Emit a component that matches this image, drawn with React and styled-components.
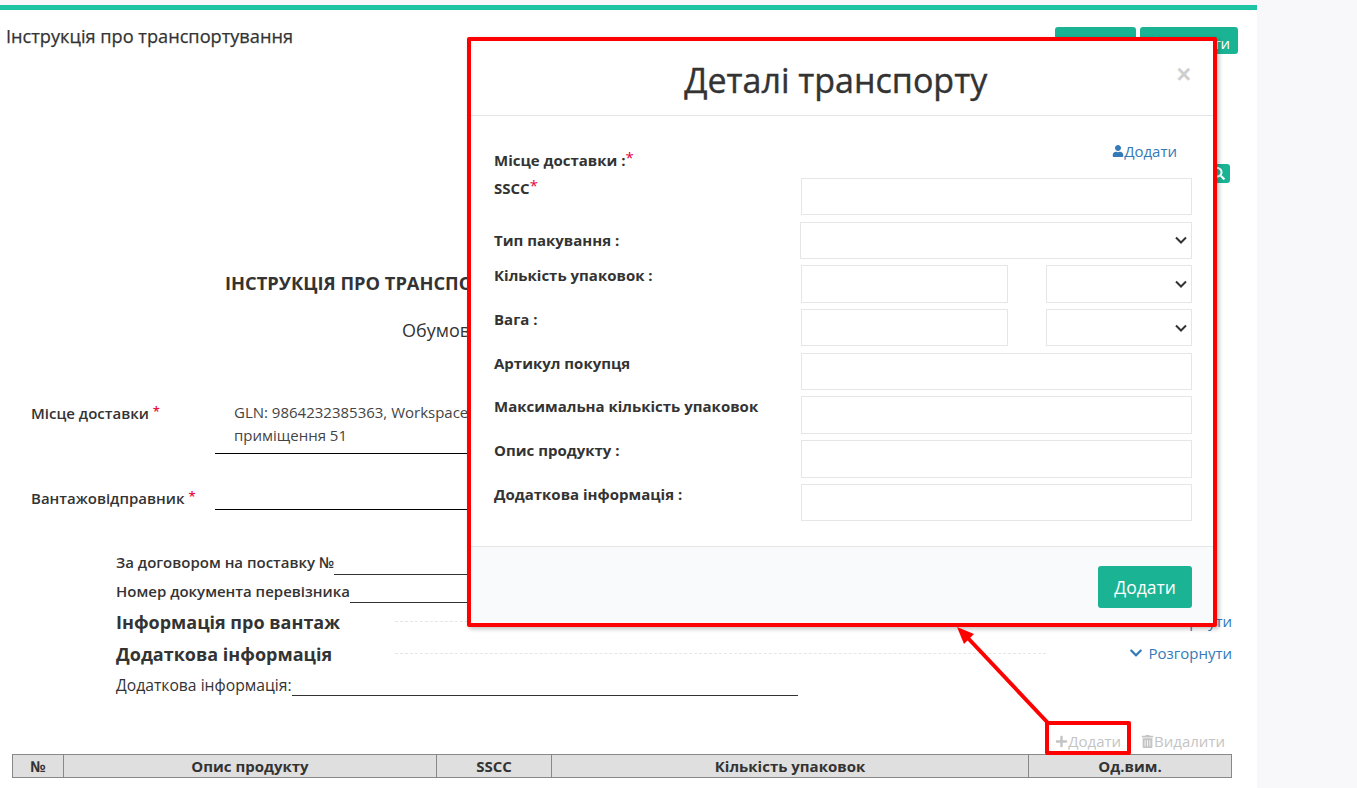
import React from "react"
import styled, { createGlobalStyle } from "styled-components"
import { FaChevronDown, FaPlus, FaSave, FaSearch, FaTrashAlt, FaUser, FaPaperPlane } from "react-icons/fa"

const GlobalStyle = createGlobalStyle`
  html, body {
    margin: 0;
    padding: 0;
    height: 100%;
    overflow: hidden;
    background: #f8f8fb;
  }
  body {
    font-family: "Open Sans", "Noto Sans", sans-serif;
    font-size: 15px;
    color: #333;
  }
  * {
    box-sizing: border-box;
  }
`

const Page = styled.div`
  position: relative;
  width: 1357px;
  height: 788px;
  overflow: hidden;
`

const Main = styled.div`
  width: 1257px;
  height: 788px;
  padding-top: 5px;
  background: linear-gradient(#f8f8fb 5px, #fff 5px);
`

const TopBand = styled.div`
  height: 5px;
  background: #1fc4a4;
`

const Header = styled.div`
  display: flex;
  justify-content: space-between;
  padding: 17px 19px 0 6px;
`

const PageTitle = styled.h2`
  margin: -1px 0 0;
  font-size: 18.2px;
  line-height: 20px;
  font-weight: 500;
  color: #333;
  -webkit-text-stroke: 0.25px #333;
`

const HeaderButtons = styled.div`
  display: flex;
  gap: 4px;
`

const GreenButton = styled.button`
  display: flex;
  align-items: center;
  justify-content: space-between;
  width: ${(p) => p.$width}px;
  height: 27px;
  padding: 5px 8px 0;
  border: 0;
  border-radius: 3px;
  background: #1ab394;
  color: #fff;
  font: 400 15px "Open Sans", sans-serif;
  svg {
    margin-top: -3px;
    font-size: 15px;
  }
`

const SearchRow = styled.div`
  display: flex;
  justify-content: flex-end;
  margin-top: 110px;
  padding-right: 27px;
`

const SearchButton = styled.button`
  display: flex;
  align-items: center;
  justify-content: flex-end;
  width: 40px;
  height: 19px;
  padding: 0 5px 0 0;
  border: 0;
  border-radius: 3px;
  background: #1ab394;
  color: #fff;
  font-size: 13px;
`

const DocHeading = styled.h3`
  margin: 88px 0 0;
  padding-left: 225px;
  font-size: 18.3px;
  line-height: 24px;
  font-weight: 700;
  color: #333;
`

const DocSubtitle = styled.div`
  margin-top: 23px;
  padding-left: 402px;
  font-size: 18px;
  line-height: 24px;
`

const PartyRow = styled.div`
  display: flex;
  margin-top: ${(p) => p.$top}px;
  padding-left: 31px;
`

const PartyLabel = styled.div`
  width: 184px;
  font-weight: 600;
  line-height: 23px;
`

const Star = styled.span`
  position: relative;
  top: -3px;
  margin-left: 4px;
  color: #e8103f;
  font-size: 13px;
`

const PartyValue = styled.div`
  width: 700px;
  height: ${(p) => p.$height}px;
  margin-top: -1px;
  padding-left: 19px;
  border-bottom: 1px solid #000;
  line-height: 23px;
  color: #444;
`

const LineRow = styled.div`
  display: flex;
  height: ${(p) => p.$height}px;
  margin-top: ${(p) => p.$top}px;
  padding-left: 116px;
  line-height: ${(p) => p.$leading || 20}px;
  font-size: ${(p) => p.$size || 15}px;
  font-weight: ${(p) => p.$weight || 600};
`

const LineFill = styled.div`
  width: ${(p) => p.$width}px;
  border-bottom: 1px solid #333;
`

const SectionRow = styled.div`
  display: flex;
  align-items: center;
  height: 24px;
  margin-top: ${(p) => p.$top}px;
  padding: 0 25px 0 116px;
`

const SectionTitle = styled.div`
  width: 279px;
  font-size: 18px;
  font-weight: 700;
  line-height: 24px;
`

const Dashes = styled.div`
  width: 651px;
  margin-top: -2px;
  border-top: 1px dashed #e5e6e7;
`

const Toggle = styled.a`
  display: flex;
  align-items: center;
  gap: 5px;
  margin: -3px 0 0 auto;
  color: #337ab7;
  font-size: 15px;
  line-height: 20px;
  svg {
    font-size: 14px;
  }
`

const Actions = styled.div`
  display: flex;
  justify-content: flex-end;
  gap: 20px;
  height: 20px;
  margin-top: 35px;
  padding-right: 32px;
`

const ActionLink = styled.a`
  display: flex;
  align-items: center;
  color: #c4c4c4;
  line-height: 20px;
  svg {
    font-size: 13px;
  }
`

const ProductTable = styled.table`
  width: 1219px;
  margin: 3px 0 0 12px;
  border-collapse: collapse;
  table-layout: fixed;
  th {
    height: 23px;
    padding: 0;
    border: 1px solid #888;
    background: #dfdfdf;
    font-size: 15px;
    font-weight: 700;
    color: #333;
  }
`

const Modal = styled.div`
  position: absolute;
  left: 467px;
  top: 37px;
  display: flex;
  flex-direction: column;
  width: 750px;
  height: 590px;
  border: 4px solid #f00;
  border-radius: 2px;
  background: #fff;
  box-shadow: 2px 2px 4px rgba(0, 0, 0, 0.25);
`

const ModalHeader = styled.div`
  display: flex;
  flex-shrink: 0;
  height: 75px;
  padding: 0 22px 0 24px;
  border-bottom: 1px solid #e5e6e7;
`

const ModalTitle = styled.h4`
  flex: 1;
  margin: 0;
  font-size: 34px;
  font-weight: 500;
  line-height: 78px;
  text-align: center;
  color: #333;
  -webkit-text-stroke: 0.4px #333;
`

const CloseButton = styled.span`
  margin-top: 21px;
  font: 700 25px/24px "Liberation Sans", sans-serif;
  color: #cfcfcf;
`

const ModalBody = styled.div`
  flex: 1;
  padding: 26px 21px 0 23px;
`

const IntroRow = styled.div`
  display: flex;
  justify-content: space-between;
  height: 36px;
  padding-right: 15px;
`

const FieldLabel = styled.label`
  display: block;
  margin-top: ${(p) => p.$top || 0}px;
  align-self: ${(p) => (p.$centered ? "center" : "start")};
  font-weight: 700;
  line-height: 20px;
  color: #333;
`

const RedStar = styled.span`
  position: relative;
  top: -3px;
  color: #e8003f;
  font-size: 15px;
  font-weight: 400;
  line-height: 0;
`

const UserLink = styled.a`
  display: flex;
  align-items: center;
  height: 20px;
  margin-top: -1px;
  color: #337ab7;
  line-height: 20px;
  svg {
    font-size: 12px;
  }
`

const FieldList = styled.div`
  display: grid;
  row-gap: 6.3px;
`

const FieldRow = styled.div`
  display: grid;
  grid-template-columns: 307px 391px;
  height: 37.4px;
`

const TextInput = styled.input`
  width: 100%;
  height: 100%;
  border: 1px solid #e5e6e7;
  background: #fff;
  outline: none;
`

const chevron =
  "data:image/svg+xml;utf8,<svg xmlns='http://www.w3.org/2000/svg' width='12' height='8' viewBox='0 0 12 8'><path d='M1 1.5l5 5 5-5' fill='none' stroke='%23333' stroke-width='2'/></svg>"

const SelectInput = styled.select`
  justify-self: ${(p) => (p.$wide ? "end" : "stretch")};
  width: ${(p) => (p.$wide ? "392px" : "100%")};
  height: 100%;
  border: 1px solid #e5e6e7;
  border-radius: 0;
  outline: none;
  appearance: none;
  background: #fff url("${chevron}") no-repeat right 4px center;
`

const SplitControls = styled.div`
  display: grid;
  grid-template-columns: 207px 146px;
  justify-content: space-between;
`

const ModalFooter = styled.div`
  display: flex;
  flex-shrink: 0;
  align-items: center;
  justify-content: flex-end;
  height: 77px;
  padding: 4px 21px 0 0;
  border-top: 1px solid #e5e6e7;
  background: #f8fafb;
`

const SubmitButton = styled.button`
  width: 94px;
  height: 42px;
  border: 0;
  border-radius: 3px;
  background: #1ab394;
  color: #fff;
  font: 400 17.5px "Open Sans", sans-serif;
`

const CalloutBox = styled.div`
  position: absolute;
  left: 1045px;
  top: 721px;
  width: 86px;
  height: 34px;
  border: 4px solid #f00;
  border-radius: 2px;
`

const CalloutArrow = styled.svg`
  position: absolute;
  left: 950px;
  top: 620px;
`

const fields = [
  { label: "Артикул покупця" },
  { label: "Максимальна кількість упаковок" },
  { label: "Опис продукту :" },
  { label: "Додаткова інформація :" },
]

function TransportModal() {
  return (
    <Modal>
      <ModalHeader>
        <ModalTitle>Деталі транспорту</ModalTitle>
        <CloseButton>×</CloseButton>
      </ModalHeader>
      <ModalBody>
        <IntroRow>
          <FieldLabel $top={8}>
            Місце доставки :<RedStar>*</RedStar>
          </FieldLabel>
          <UserLink>
            <FaUser />
            Додати
          </UserLink>
        </IntroRow>
        <FieldList>
          <FieldRow>
            <FieldLabel>
              SSCC<RedStar>*</RedStar>
            </FieldLabel>
            <TextInput />
          </FieldRow>
          <FieldRow>
            <FieldLabel $centered>Тип пакування :</FieldLabel>
            <SelectInput $wide />
          </FieldRow>
          <FieldRow>
            <FieldLabel>Кількість упаковок :</FieldLabel>
            <SplitControls>
              <TextInput />
              <SelectInput />
            </SplitControls>
          </FieldRow>
          <FieldRow>
            <FieldLabel>Вага :</FieldLabel>
            <SplitControls>
              <TextInput />
              <SelectInput />
            </SplitControls>
          </FieldRow>
          {fields.map((f) => (
            <FieldRow key={f.label}>
              <FieldLabel>{f.label}</FieldLabel>
              <TextInput />
            </FieldRow>
          ))}
        </FieldList>
      </ModalBody>
      <ModalFooter>
        <SubmitButton>Додати</SubmitButton>
      </ModalFooter>
    </Modal>
  )
}

function App() {
  return (
    <Page>
      <GlobalStyle />
      <Main>
        <TopBand />
        <Header>
          <PageTitle>Інструкція про транспортування</PageTitle>
          <HeaderButtons>
            <GreenButton $width={81}>
              <FaSave />
              Зберегти
            </GreenButton>
            <GreenButton $width={98}>
              <FaPaperPlane />
              Надіслати
            </GreenButton>
          </HeaderButtons>
        </Header>
        <SearchRow>
          <SearchButton>
            <FaSearch />
          </SearchButton>
        </SearchRow>
        <DocHeading>ІНСТРУКЦІЯ ПРО ТРАНСПОРТУВАННЯ</DocHeading>
        <DocSubtitle>Обумовлені умови</DocSubtitle>
        <PartyRow $top={60}>
          <PartyLabel>
            Місце доставки<Star>*</Star>
          </PartyLabel>
          <PartyValue $height={53}>
            GLN: 9864232385363, Workspace
            <br />
            приміщення 51
          </PartyValue>
        </PartyRow>
        <PartyRow $top={33}>
          <PartyLabel>
            Вантажовідправник<Star>*</Star>
          </PartyLabel>
          <PartyValue $height={24} />
        </PartyRow>
        <LineRow $top={41} $height={23}>
          За договором на поставку №
          <LineFill $width={463} />
        </LineRow>
        <LineRow $top={6} $height={22}>
          Номер документа перевізника
          <LineFill $width={448} />
        </LineRow>
        <SectionRow $top={7}>
          <SectionTitle>Інформація про вантаж</SectionTitle>
          <Dashes />
          <Toggle>
            <FaChevronDown />
            Розгорнути
          </Toggle>
        </SectionRow>
        <SectionRow $top={8}>
          <SectionTitle>Додаткова інформація</SectionTitle>
          <Dashes />
          <Toggle>
            <FaChevronDown />
            Розгорнути
          </Toggle>
        </SectionRow>
        <LineRow $top={10} $height={20} $size={15.7} $weight={400} $leading={18}>
          Додаткова інформація:
          <LineFill $width={506} />
        </LineRow>
        <Actions>
          <ActionLink>
            <FaPlus />
            Додати
          </ActionLink>
          <ActionLink>
            <FaTrashAlt />
            Видалити
          </ActionLink>
        </Actions>
        <ProductTable>
          <colgroup>
            <col width="51" />
            <col width="373" />
            <col width="115" />
            <col width="477" />
            <col width="203" />
          </colgroup>
          <thead>
            <tr>
              <th>№</th>
              <th>Опис продукту</th>
              <th>SSCC</th>
              <th>Кількість упаковок</th>
              <th>Од.вим.</th>
            </tr>
          </thead>
        </ProductTable>
      </Main>
      <TransportModal />
      <CalloutBox />
      <CalloutArrow width="110" height="110" viewBox="950 620 110 110">
        <line x1="1048" y1="723" x2="966" y2="636" stroke="#f00" strokeWidth="4" />
        <polygon points="957,627 974,634 964,644" fill="#f00" />
      </CalloutArrow>
    </Page>
  )
}

export default App
